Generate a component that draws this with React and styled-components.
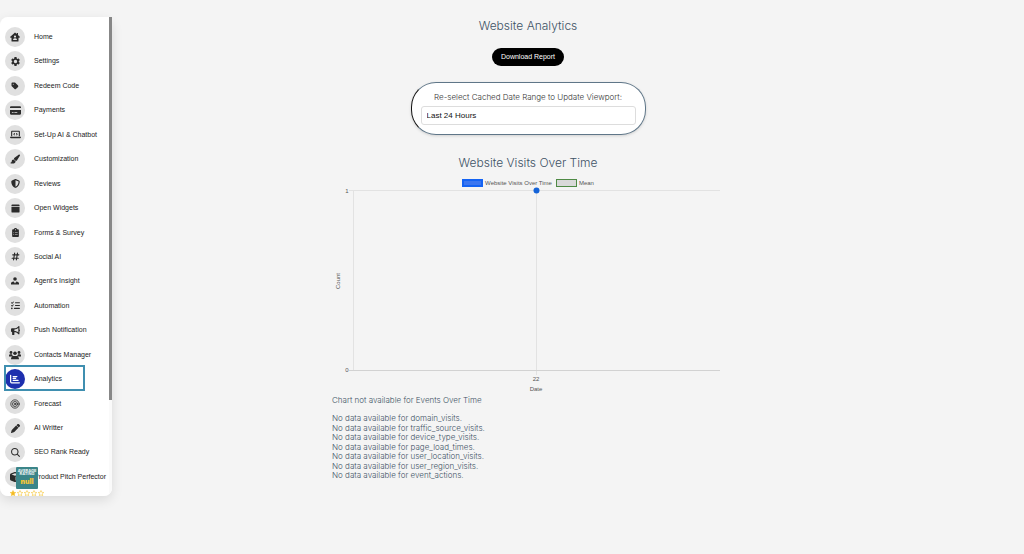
import React from 'react';
import styled, { createGlobalStyle } from 'styled-components';
import {
  FaTag, FaCreditCard, FaLaptopCode, FaPaintbrush, FaShieldHalved,
  FaClipboardList, FaHashtag, FaListCheck, FaBullhorn, FaChartBar, FaPen, FaCube,
} from 'react-icons/fa6';
import { MdSettings } from 'react-icons/md';
import { LuTarget } from 'react-icons/lu';
import { IoSearch } from 'react-icons/io5';

const Global = createGlobalStyle`
  * { box-sizing: border-box; }
  body {
    margin: 0;
    background: #f4f4f4;
    color: #3d5265;
    font-family: Inter, "Liberation Sans", sans-serif;
  }
`;

const Page = styled.div`
  display: grid;
  grid-template-columns: 112px minmax(0, 1fr);
  align-items: start;
  min-height: 100vh;
  padding-top: 17px;
`;

const SidebarShell = styled.div`
  border-radius: 8px;
  box-shadow: 0 4px 12px rgba(0, 0, 0, 0.11);
`;

const Sidebar = styled.aside`
  position: relative;
  height: 479px;
  padding: 10px 0 0 5px;
  overflow: hidden;
  background: #fff;
  border-radius: 8px 0 8px 8px;
`;

const ScrollTrack = styled.div`
  position: absolute;
  top: 0;
  right: 0;
  width: 3px;
  height: 100%;
  background: #fafafa;
`;

const ScrollThumb = styled.div`
  height: 80%;
  background: #878787;
`;

const NavList = styled.ul`
  display: flex;
  flex-direction: column;
  justify-content: space-between;
  height: 460px;
  margin: 0;
  padding: 0;
  list-style: none;
`;

const NavLink = styled.a`
  position: relative;
  display: flex;
  align-items: center;
  gap: 9px;
  width: 79px;
  height: 20px;
  color: #1c1c1c;
  font: 7px/20px "Liberation Sans", Arial, sans-serif;
  white-space: nowrap;
  text-decoration: none;

  &[aria-current]::after {
    content: "";
    position: absolute;
    inset: -4px -1px -2px;
    border: 2px solid #3f8fb0;
  }
`;

const IconDisc = styled.span`
  display: grid;
  flex: none;
  place-items: center;
  width: 20px;
  height: 20px;
  border-radius: 50%;
  background: ${({ $active }) => ($active ? '#1e2fae' : '#e0e0e0')};
  color: ${({ $active }) => ($active ? '#fff' : '#2b2b2b')};

  svg { width: ${({ $size }) => $size}px; height: ${({ $size }) => $size}px; }
`;

const Rating = styled.div`
  position: absolute;
  left: 10px;
  top: 450px;
`;

const RatingCard = styled.div`
  width: 22px;
  height: 22px;
  margin-left: 6px;
  padding-top: 2px;
  border-radius: 1px;
  background: #3b8589;
  color: #fff;
  font-size: 4px;
  font-weight: 600;
  line-height: 3px;
  text-align: center;

  strong {
    display: block;
    margin-top: 2px;
    color: #f5c638;
    font-size: 7px;
    line-height: 10px;
  }
`;

const Stars = styled.svg`
  display: block;
  width: 34px;
  height: 7px;
  margin-top: 1px;
`;

const Main = styled.main`
  display: flex;
  flex-direction: column;
  align-items: center;
  padding-right: 80px;
`;

const Heading = styled.h2`
  margin: 0;
  font-size: 12px;
  font-weight: 300;
  line-height: 18px;
`;

const DownloadButton = styled.button`
  height: 18px;
  margin: 13px 0 16px;
  padding: 0 9px;
  border: 0;
  border-radius: 9px;
  background: #000;
  color: #fff;
  font: 7px/18px "Liberation Sans", Arial, sans-serif;
`;

const RangeCard = styled.section`
  display: flex;
  flex-direction: column;
  align-items: center;
  width: 100%;
  max-width: 235px;
  margin-bottom: 19px;
  padding: 8px 9px 9px;
  border: 1px solid #5f7688;
  border-left-color: #111;
  border-radius: 25px;
  background: #fff;
  box-shadow: 0 1px 3px rgba(0, 0, 0, 0.15);
`;

const RangeLabel = styled.label`
  margin-bottom: 3px;
  color: #333;
  font-size: 8px;
  font-weight: 300;
  line-height: 12px;
`;

const RangeSelect = styled.select`
  width: 100%;
  height: 19px;
  padding: 0 5px;
  appearance: none;
  border: 1px solid #ddd;
  border-radius: 3px;
  background: #fff;
  color: #111;
  font: 8px "Liberation Sans", Arial, sans-serif;
`;

const Report = styled.section`
  display: flex;
  flex-direction: column;
  align-items: center;
  width: 100%;
  max-width: 392px;
`;

const Legend = styled.div`
  display: flex;
  align-items: center;
  gap: 4px;
  margin-top: 7px;
  color: #555;
  font: 6px/8px "Liberation Sans", Arial, sans-serif;
`;

const LegendItem = styled.span`
  display: flex;
  align-items: center;
  gap: 2px;
`;

const Swatch = styled.i`
  width: 21px;
  height: 8px;
  border: ${({ $weight }) => $weight}px solid ${({ $line }) => $line};
  background: ${({ $fill }) => $fill};
`;

const Chart = styled.svg`
  display: block;
  width: 100%;
  height: auto;

  text {
    fill: #555;
    font: 6px "Liberation Sans", Arial, sans-serif;
    text-anchor: middle;
  }
`;

const Notice = styled.p`
  width: 100%;
  margin: 0 0 9px;
  font-size: 8px;
  font-weight: 300;
  line-height: 10px;
`;

const NoDataList = styled.ul`
  display: flex;
  flex-direction: column;
  justify-content: space-between;
  width: 100%;
  height: 66px;
  margin: 0;
  padding: 0;
  list-style: none;
  font-size: 8px;
  font-weight: 300;
  line-height: 9px;
`;

const HomeIcon = () => (
  <svg viewBox="0 0 20 20" fill="currentColor" fillRule="evenodd">
    <path d="M10 1l3.500 3V2H16v4.200l4 3.800-1.200 1.500H17V18a1 1 0 0 1-1 1H4a1 1 0 0 1-1-1v-6.500H1.200L0 10zM10 7a2.200 2.200 0 1 0 0 4.400A2.200 2.200 0 0 0 10 7zM6 16h8a3.500 3.500 0 0 0-3.500-3.500h-1A3.500 3.500 0 0 0 6 16z" />
  </svg>
);

const WidgetIcon = () => (
  <svg viewBox="0 0 20 20" fill="currentColor">
    <path d="M3 1h14a2 2 0 0 1 2 2v2H1V3a2 2 0 0 1 2-2zM1 6.500h18V17a2 2 0 0 1-2 2H3a2 2 0 0 1-2-2z" />
  </svg>
);

const AgentIcon = () => (
  <svg viewBox="0 0 20 20" fill="currentColor">
    <circle cx="10" cy="5" r="4.500" />
    <path d="M0 19v-3.500C0 13 3 11.500 7 11l2.200 5 .8-4 .8 4 2.200-5c4 .5 7 2 7 4.500V19z" />
  </svg>
);

const ContactsIcon = () => (
  <svg viewBox="0 0 24 20" fill="currentColor">
    <circle cx="4" cy="5" r="2.800" />
    <circle cx="20" cy="5" r="2.800" />
    <circle cx="12" cy="6.500" r="3.600" />
    <path d="M0 13V11a2.500 2.500 0 0 1 2.500-2.500H6A6 6 0 0 0 8 12l-1.500 1zM24 13v-2a2.500 2.500 0 0 0-2.500-2.500H18a6 6 0 0 1-2 3.500l1.500 1zM4 18.500c0-4 2-6.500 5-6.500h6c3 0 5 2.500 5 6.500z" />
  </svg>
);

const navItems = [
  ['Home', HomeIcon, 10],
  ['Settings', MdSettings, 11],
  ['Redeem Code', FaTag, 8],
  ['Payments', FaCreditCard, 11],
  ['Set-Up AI & Chatbot', FaLaptopCode, 11],
  ['Customization', FaPaintbrush, 10],
  ['Reviews', FaShieldHalved, 9],
  ['Open Widgets', WidgetIcon, 9],
  ['Forms & Survey', FaClipboardList, 9],
  ['Social AI', FaHashtag, 9],
  ["Agent's Insight", AgentIcon, 8],
  ['Automation', FaListCheck, 9],
  ['Push Notification', FaBullhorn, 9],
  ['Contacts Manager', ContactsIcon, 12],
  ['Analytics', FaChartBar, 10],
  ['Forecast', LuTarget, 10],
  ['AI Writter', FaPen, 9],
  ['SEO Rank Ready', IoSearch, 11],
  ['Product Pitch Perfector', FaCube, 10],
];

const missing = [
  'domain_visits', 'traffic_source_visits', 'device_type_visits', 'page_load_times',
  'user_location_visits', 'user_region_visits', 'event_actions',
];

const STAR = 'M3 .5l.8 1.8 2 .2-1.5 1.3.4 2L3 4.8l-1.700 1 .4-2L.2 2.5l2-.2z';

export default function App() {
  return (
    <>
      <Global />
      <Page>
        <SidebarShell>
          <Sidebar>
            <nav>
              <NavList>
                {navItems.map(([label, Icon, size]) => {
                  const active = label === 'Analytics';
                  return (
                    <li key={label}>
                      <NavLink href="#" aria-current={active ? 'page' : undefined}>
                        <IconDisc $active={active} $size={size}><Icon /></IconDisc>
                        {label}
                      </NavLink>
                    </li>
                  );
                })}
              </NavList>
            </nav>
            <Rating>
              <RatingCard>AVERAGE<br />RATING<strong>null</strong></RatingCard>
              <Stars viewBox="0 0 34 7">
                {[0, 1, 2, 3, 4].map((n) => (
                  <path key={n} d={STAR} transform={`translate(${n * 7} 0)`}
                    fill={n === 0 ? '#f5b921' : 'none'} stroke="#f5c638" strokeWidth=".6" />
                ))}
              </Stars>
            </Rating>
            <ScrollTrack><ScrollThumb /></ScrollTrack>
          </Sidebar>
        </SidebarShell>
        <Main>
          <Heading as="h1">Website Analytics</Heading>
          <DownloadButton type="button">Download Report</DownloadButton>
          <RangeCard>
            <RangeLabel htmlFor="range">Re-select Cached Date Range to Update Viewport:</RangeLabel>
            <RangeSelect id="range"><option>Last 24 Hours</option></RangeSelect>
          </RangeCard>
          <Report>
            <Heading>Website Visits Over Time</Heading>
            <Legend>
              <LegendItem><Swatch $weight={2} $line="#1463f3" $fill="#3b76f0" />Website Visits Over Time</LegendItem>
              <LegendItem><Swatch $weight={1} $line="#4f8a45" $fill="#d9d9d9" />Mean</LegendItem>
            </Legend>
            <Chart viewBox="0 0 392 208" role="img" aria-label="Website visits over time">
              <g stroke="#e2e2e2" fill="none">
                <path d="M17 3.500H388M21.500 3V184M204.500 3V188" />
                <path d="M17 183.500H388" stroke="#d2d2d2" />
              </g>
              <circle cx="204.500" cy="3.500" r="3" fill="#1463d8" />
              <text x="15" y="6">1</text>
              <text x="15" y="185">0</text>
              <text x="204" y="194">22</text>
              <text x="204" y="204">Date</text>
              <text transform="translate(8 94) rotate(-90)">Count</text>
            </Chart>
            <Notice>Chart not available for Events Over Time</Notice>
            <NoDataList>
              {missing.map((name) => <li key={name}>No data available for {name}.</li>)}
            </NoDataList>
          </Report>
        </Main>
      </Page>
    </>
  );
}
